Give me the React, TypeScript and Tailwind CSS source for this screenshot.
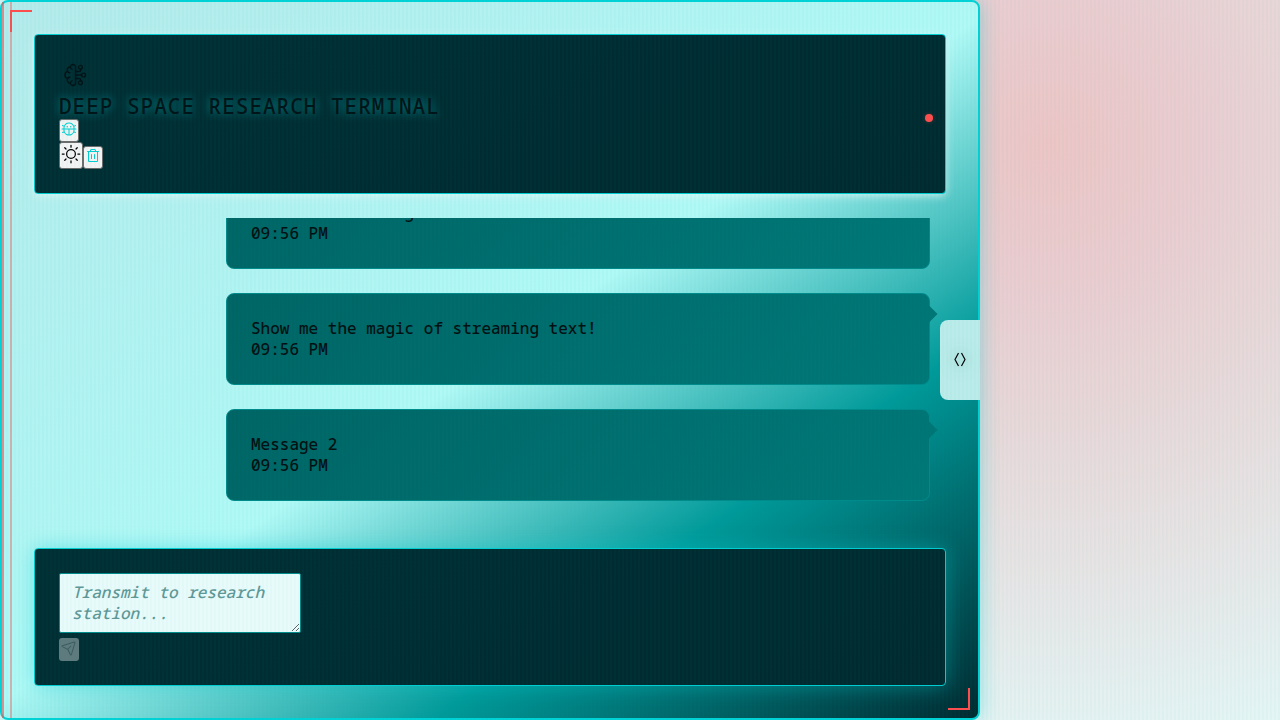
import { PiBug, PiPaperPlaneTilt, PiSun, PiTrash } from "react-icons/pi";

type Message = { id: number; text: string; time: string };

const messages: Message[] = [
  { id: 1, text: "First test message", time: "09:56 PM" },
  { id: 2, text: "Show me the magic of streaming text!", time: "09:56 PM" },
  { id: 3, text: "Message 2", time: "09:56 PM" },
];

function BrainIcon() {
  return (
    <svg viewBox="0 0 24 24" className="ml-1 h-6 w-6" fill="none" stroke="currentColor" strokeWidth="1.4" strokeLinecap="round" strokeLinejoin="round" aria-hidden="true">
      <path d="M12.500 4c0-1.500-1-2.500-2.500-2.500S7.600 2.500 7.500 4C5.500 4 4.200 5.300 4.200 7c0 .6.100 1 .4 1.500C3 9 2 10.300 2 12s1 3 2.600 3.500c-.3.500-.4 1-.4 1.500 0 1.700 1.300 3 3.300 3 .1 1.500 1.100 2.500 2.500 2.500s2.500-1 2.500-2.500z" />
      <path d="M7.500 4c0 1 .5 2 1.500 2.300M4.600 8.500c.6 1 1.400 1.300 2.400 1.300M4.600 15.500c.7-.9 1.400-1.200 2.400-1.200M7.500 20c0-1 .5-1.900 1.500-2.300" />
      <path d="M12.500 8.500h4a1 1 0 0 0 1-1V6.200M12.500 12h6M12.500 15.500h4a1 1 0 0 1 1 1v1.300" />
      <circle cx="17.500" cy="4.300" r="1.900" />
      <circle cx="20.600" cy="12" r="1.900" />
      <circle cx="17.500" cy="19.700" r="1.900" />
    </svg>
  );
}

function Bubble({ message }: { message: Message }) {
  return (
    <li className="relative w-4/5 shrink-0 rounded-lg border border-[#008b8b] bg-linear-135 from-[#006464] to-[#007777] p-6 leading-[21px] text-[#000f11]">
      <p>{message.text}</p>
      <time className="block">{message.time}</time>
      <span className="absolute top-3.5 -right-1.5 size-3 rotate-45 bg-[#007575]" />
    </li>
  );
}

export default function App() {
  return (
    <div className="relative min-h-screen bg-[radial-gradient(circle_at_82%_20%,#edc5c5_0%,#eacdd0_150px,#e8d8d9_290px,#e7e5e5_440px,#e4f6f5_620px)] font-['Noto_Sans_Mono','DejaVu_Sans_Mono',monospace] text-base font-medium">
      <main className="relative mr-[300px] flex h-screen flex-col gap-6 rounded-lg border-2 border-[#00d2d5] bg-[linear-gradient(145deg,#b5eaea_0%,#b0f9f6_50%,#009999_73%,#002a30_100%)] p-8 shadow-[0_0_20px_rgba(0,206,209,0.4)]">
        <span className="absolute inset-y-0 left-0 w-2.5 border-x-2 border-l-[#ff4d4d]/60 border-r-[#ff4d4d]/40" />
        <span className="absolute top-2 left-2 size-[22px] border-t-2 border-l-2 border-[#ff4d4d]" />
        <span className="absolute right-2 bottom-2 size-[22px] border-r-2 border-b-2 border-[#ff4d4d]" />

        <header className="relative shrink-0 rounded-sm border border-[#00ced1] bg-linear-145 from-[#002f34] to-[#002a2f] p-6 text-[#001316] shadow-[0_2px_8px_rgba(225,245,245,0.8)]">
          <div className="pt-1 pb-1.5">
            <BrainIcon />
          </div>
          <h1 className="text-[21px] leading-[26px] tracking-[1px] [text-shadow:0_0_10px_#008f93]">DEEP SPACE RESEARCH TERMINAL</h1>
          <button type="button" aria-label="Debug" className="flex h-[23px] w-5 items-start justify-center rounded-[3px] border border-[#6b6b6b] bg-[#f3f3f3] pt-px text-base text-[#00ced1]">
            <PiBug />
          </button>
          <div className="flex items-end">
            <button type="button" aria-label="Toggle theme" className="flex h-[27px] w-6 items-start justify-center rounded-[3px] border border-[#6b6b6b] bg-[#f3f3f3] pt-px text-xl text-black">
              <PiSun />
            </button>
            <button type="button" aria-label="Clear messages" className="flex h-[23px] w-5 items-start justify-center rounded-[3px] border border-[#6b6b6b] bg-[#f3f3f3] pt-px text-base text-[#00ced1]">
              <PiTrash />
            </button>
          </div>
          <span className="absolute top-1/2 right-3 size-2 rounded-full bg-[#ff4d4d] shadow-[0_0_4px_rgba(255,77,77,0.3)]" />
        </header>

        <ul className="flex min-h-0 grow flex-col items-end justify-end gap-6 overflow-hidden px-4 pb-[23px]">
          {messages.map((message) => (
            <Bubble key={message.id} message={message} />
          ))}
        </ul>

        <form className="shrink-0 rounded-sm border border-[#00ced1] bg-linear-145 from-[#002f34] to-[#002a2f] p-6 shadow-[0_0_20px_rgba(0,206,209,0.4)]" onSubmit={(event) => event.preventDefault()}>
          <textarea aria-label="Message" placeholder="Transmit to research station..." className="mb-[5px] block h-[60px] w-[242px] rounded-xs border border-[#008b8b] bg-[#e8fbfa] px-3 py-2 leading-[21px] placeholder:text-[#5f9797] placeholder:italic" />
          <button type="submit" aria-label="Send" disabled className="flex h-[23px] w-5 items-start justify-center rounded-[3px] bg-[#5f7a7d] pt-0.5 text-base text-[#3c5c60]">
            <PiPaperPlaneTilt />
          </button>
        </form>

        <button type="button" aria-label="Open side panel" className="absolute top-1/2 -right-0.5 flex h-20 w-10 -translate-y-1/2 items-center justify-center rounded-l-lg bg-[#bbecea] text-black">
          <svg viewBox="0 0 12 16" className="h-4 w-3 drop-shadow-[0_0_8px_rgba(0,70,70,0.6)]" fill="none" stroke="currentColor" strokeWidth="1.2" aria-hidden="true">
            <path d="M4.500 1 1 7.500l3.500 6.500M7.500 1 11 7.500 7.500 14" />
          </svg>
        </button>
      </main>
      <div className="pointer-events-none absolute inset-0 bg-[repeating-linear-gradient(90deg,transparent_0px,transparent_2px,rgba(0,170,175,0.03)_2px,rgba(0,170,175,0.03)_4px)]" />
    </div>
  );
}
